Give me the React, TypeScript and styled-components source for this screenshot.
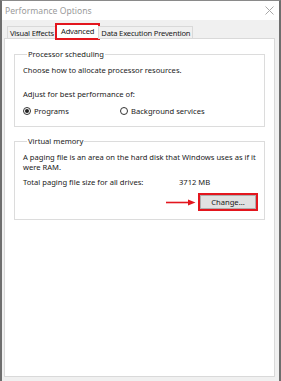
import React from 'react'
import styled, { createGlobalStyle } from 'styled-components'

const GlobalStyle = createGlobalStyle`
  html, body {
    margin: 0;
    padding: 0;
    background: #f0f0f0;
  }
  body {
    font-family: "Noto Sans", "Open Sans", sans-serif;
    font-size: 7.6px;
    color: #1a1a1a;
  }
`;

const Window = styled.div`
  width: 281px;
  height: 381px;
  box-sizing: border-box;
  display: flex;
  flex-direction: column;
  background: #f0f0f0;
  border-top: 1px solid #8a8a8a;
  border-left: 2px solid #6e6e6e;
  border-right: 2px solid #6e6e6e;
  overflow: hidden;
`;

const TitleBar = styled.div`
  height: 19px;
  background: #fff;
  display: flex;
  align-items: center;
  justify-content: space-between;
  padding: 0 5px 0 3px;
  color: #9a9a9a;
  font-size: 8.6px;
`;

const Body = styled.div`
  flex: 1;
  display: flex;
  flex-direction: column;
  padding: 4px 4px 4px 2px;
`;

const TabRow = styled.div`
  display: flex;
  align-items: flex-end;
  height: 15px;
  padding-left: 3px;
  margin-bottom: -1px;
  position: relative;
  z-index: 1;
`;

const Tab = styled.div<{ $active?: boolean; $marked?: boolean }>`
  box-sizing: border-box;
  height: ${p => (p.$active ? 15 : 13)}px;
  line-height: ${p => (p.$active ? 13 : 12)}px;
  padding: 0 ${p => (p.$active ? 4 : 2)}px;
  letter-spacing: -0.2px;
  white-space: nowrap;
  background: ${p => (p.$active ? '#fff' : '#f0f0f0')};
  border: 1px solid #d9d9d9;
  border-bottom: ${p => (p.$active ? '1px solid #fff' : '1px solid #d9d9d9')};
  ${p => p.$marked && 'outline: 2px solid #e3161e; outline-offset: -1px;'}
  & + & {
    margin-left: -1px;
  }
`;

const Panel = styled.div`
  flex: 1;
  background: #fff;
  border: 1px solid #d9d9d9;
  padding: 10px 9px;
  display: flex;
  flex-direction: column;
  gap: 9px;
`;

const Group = styled.fieldset`
  margin: 0;
  border: 1px solid #dcdcdc;
  padding: 6px 8px 10px;
  display: flex;
  flex-direction: column;
`;

const Legend = styled.legend`
  padding: 0 1px;
  margin-left: 4px;
  line-height: 10px;
`;

const Line = styled.div<{ $top?: number }>`
  line-height: 10px;
  margin-top: ${p => p.$top || 0}px;
  white-space: nowrap;
`;

const RadioRow = styled.div`
  display: flex;
  margin-top: 7px;
  line-height: 10px;
`;

const Radio = styled.label<{ $w?: number }>`
  display: flex;
  align-items: center;
  gap: 3px;
  ${p => p.$w && `width: ${p.$w}px;`}
`;

const Dot = styled.span<{ $on?: boolean }>`
  width: 8px;
  height: 8px;
  box-sizing: border-box;
  border-radius: 50%;
  border: 1px solid #333;
  display: flex;
  align-items: center;
  justify-content: center;
  &::after {
    content: '';
    width: 4px;
    height: 4px;
    border-radius: 50%;
    background: ${p => (p.$on ? '#222' : 'transparent')};
  }
`;

const SizeRow = styled.div`
  display: grid;
  grid-template-columns: 156px 1fr;
  line-height: 10px;
  margin-top: 5px;
`;

const ButtonRow = styled.div`
  display: flex;
  justify-content: flex-end;
  align-items: center;
  gap: 4px;
  margin-top: 8px;
`;

const Button = styled.button`
  width: 56px;
  height: 14px;
  padding: 0;
  font-family: inherit;
  font-size: 7.6px;
  color: #1a1a1a;
  background: #e1e1e1;
  border: 1px solid #adadad;
  outline: 2px solid #e3161e;
`;

const Arrow = () => (
  <svg width="30" height="7" viewBox="0 0 30 7">
    <line x1="0" y1="3.5" x2="24" y2="3.5" stroke="#e3161e" strokeWidth="1.6" />
    <polygon points="22,0.5 29.5,3.5 22,6.5" fill="#e3161e" />
  </svg>
);

const CloseIcon = () => (
  <svg width="9" height="9" viewBox="0 0 9 9">
    <path d="M0.5 0.5 L8.5 8.5 M8.5 0.5 L0.5 8.5" stroke="#a8a8a8" strokeWidth="1" />
  </svg>
);

const App = () => {
  return (
    <>
      <GlobalStyle />
      <Window>
        <TitleBar>
          <span>Performance Options</span>
          <CloseIcon />
        </TitleBar>
        <Body>
          <TabRow>
            <Tab>Visual Effects</Tab>
            <Tab $active $marked>Advanced</Tab>
            <Tab>Data Execution Prevention</Tab>
          </TabRow>
          <Panel>
            <Group>
              <Legend>Processor scheduling</Legend>
              <Line>Choose how to allocate processor resources.</Line>
              <Line $top={14}>Adjust for best performance of:</Line>
              <RadioRow>
                <Radio $w={97}><Dot $on />Programs</Radio>
                <Radio><Dot />Background services</Radio>
              </RadioRow>
            </Group>
            <Group>
              <Legend>Virtual memory</Legend>
              <Line>A paging file is an area on the hard disk that Windows uses as if it</Line>
              <Line>were RAM.</Line>
              <SizeRow>
                <span>Total paging file size for all drives:</span>
                <span>3712 MB</span>
              </SizeRow>
              <ButtonRow>
                <Arrow />
                <Button>Change...</Button>
              </ButtonRow>
            </Group>
          </Panel>
        </Body>
      </Window>
    </>
  )
}

export default App
